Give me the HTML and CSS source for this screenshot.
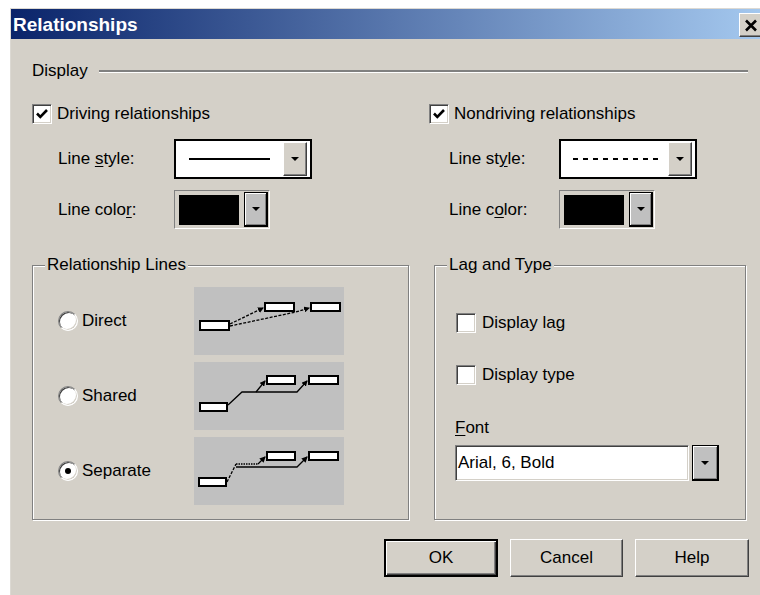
FILE: index.html
```html
<!DOCTYPE html>
<html lang="en">
<head>
<meta charset="utf-8">
<title>Relationships</title>
<link rel="stylesheet" href="styles.css">
</head>
<body>
<div class="window">
  <div class="titlebar">
    <span class="title">Relationships</span>
    <button class="close" aria-label="Close">
      <svg width="14" height="13" viewBox="0 0 14 13"><path d="M2 1.5L12 11.5M12 1.5L2 11.5" stroke="#000" stroke-width="2.6" fill="none"/></svg>
    </button>
  </div>

  <div class="client">
    <div class="section-head"><span>Display</span><span class="rule"></span></div>

    <div class="display-cols">
      <div class="col col-left">
        <div class="check-row">
          <span class="checkbox"><svg viewBox="0 0 16 16" width="16" height="16"><path d="M3 7.5L6.3 10.8L13 4" stroke="#000" stroke-width="2.6" fill="none"/></svg></span>
          <span>Driving relationships</span>
        </div>
        <div class="field-row">
          <span>Line <u>s</u>tyle:</span>
          <div class="combo">
            <span class="combo-value"><span class="line-sample solid"></span></span>
            <span class="combo-btn"><span class="arrow"></span></span>
          </div>
        </div>
        <div class="field-row">
          <span>Line colo<u>r</u>:</span>
          <div class="color-combo">
            <span class="swatch"></span>
            <span class="dark-btn"><span class="arrow"></span></span>
          </div>
        </div>
      </div>

      <div class="col col-right">
        <div class="check-row">
          <span class="checkbox"><svg viewBox="0 0 16 16" width="16" height="16"><path d="M3 7.5L6.3 10.8L13 4" stroke="#000" stroke-width="2.6" fill="none"/></svg></span>
          <span>Nondriving relationships</span>
        </div>
        <div class="field-row">
          <span>Line st<u>y</u>le:</span>
          <div class="combo">
            <span class="combo-value"><span class="line-sample dashed"></span></span>
            <span class="combo-btn"><span class="arrow"></span></span>
          </div>
        </div>
        <div class="field-row">
          <span>Line c<u>o</u>lor:</span>
          <div class="color-combo">
            <span class="swatch"></span>
            <span class="dark-btn"><span class="arrow"></span></span>
          </div>
        </div>
      </div>
    </div>

    <div class="groups">
      <fieldset class="group group-lines">
        <legend>Relationship Lines</legend>
        <div class="line-rows">
          <div class="radio-row"><span class="radio"></span><span>Direct</span></div>
          <svg class="diagram" viewBox="0 0 150 68" width="150" height="68">
            <defs><marker id="ah1" viewBox="0 0 6 6" refX="5" refY="3" markerWidth="6" markerHeight="6" markerUnits="userSpaceOnUse" orient="auto"><path d="M0 0L6 3L0 6z"/></marker></defs>
            <g fill="none" stroke="#000" stroke-width="1.3" stroke-dasharray="3 1.5">
              <path d="M36 37L69 21" marker-end="url(#ah1)"/>
              <path d="M36 39L102 25L115 21" marker-end="url(#ah1)"/>
            </g>
            <g fill="#fff" stroke="#000" stroke-width="2">
              <rect x="6" y="34" width="29" height="9"/>
              <rect x="71" y="16" width="29" height="8"/>
              <rect x="117" y="16" width="29" height="8"/>
            </g>
          </svg>

          <div class="radio-row"><span class="radio"></span><span>Shared</span></div>
          <svg class="diagram" viewBox="0 0 150 68" width="150" height="68">
            <defs><marker id="ah2" viewBox="0 0 6 6" refX="5" refY="3" markerWidth="6" markerHeight="6" markerUnits="userSpaceOnUse" orient="auto"><path d="M0 0L6 3L0 6z"/></marker></defs>
            <g fill="none" stroke="#000" stroke-width="1.3">
              <path d="M34 43L48 30L103 30L113 19" marker-end="url(#ah2)"/>
              <path d="M62 30L71 19" marker-end="url(#ah2)"/>
            </g>
            <g fill="#fff" stroke="#000" stroke-width="2">
              <rect x="6" y="41" width="27" height="8"/>
              <rect x="73" y="14" width="28" height="8"/>
              <rect x="115" y="14" width="29" height="8"/>
            </g>
          </svg>

          <div class="radio-row"><span class="radio checked"></span><span>Separate</span></div>
          <svg class="diagram" viewBox="0 0 150 68" width="150" height="68">
            <defs><marker id="ah3" viewBox="0 0 6 6" refX="5" refY="3" markerWidth="6" markerHeight="6" markerUnits="userSpaceOnUse" orient="auto"><path d="M0 0L6 3L0 6z"/></marker></defs>
            <g fill="none" stroke="#000" stroke-width="1.3">
              <path d="M33 45L42 27" stroke-dasharray="3 1.5"/>
              <path d="M42 27L64 27" stroke-dasharray="1.5 1"/>
              <path d="M64 27L71 20" marker-end="url(#ah3)"/>
              <path d="M42 30L103 30L113 20" marker-end="url(#ah3)"/>
            </g>
            <g fill="#fff" stroke="#000" stroke-width="2">
              <rect x="5" y="41" width="27" height="8"/>
              <rect x="73" y="15" width="28" height="8"/>
              <rect x="115" y="15" width="29" height="8"/>
            </g>
          </svg>
        </div>
      </fieldset>

      <fieldset class="group group-lag">
        <legend>Lag and Type</legend>
        <div class="lag-body">
          <div class="check-row lag-check"><span class="checkbox"></span><span>Display lag</span></div>
          <div class="check-row lag-check second"><span class="checkbox"></span><span>Display type</span></div>
          <div class="font-label"><u>F</u>ont</div>
          <div class="font-combo">
            <span class="font-field">Arial, 6, Bold</span>
            <span class="dark-btn wide"><span class="arrow"></span></span>
          </div>
        </div>
      </fieldset>
    </div>

    <div class="actions">
      <button class="btn default">OK</button>
      <button class="btn narrow">Cancel</button>
      <button class="btn">Help</button>
    </div>
  </div>
</div>
</body>
</html>
```

FILE: styles.css
```css
* {
  box-sizing: border-box;
}

html,
body {
  margin: 0;
  background: #fff;
  overflow: hidden;
}

body {
  font-family: "Liberation Sans", Arial, sans-serif;
  font-size: 17px;
  line-height: 20px;
  color: #000;
}

u {
  text-decoration-thickness: 1px;
  text-underline-offset: 2px;
}

/* dialog frame */
.window {
  margin: 8px 0 0 10px;
  width: 761px;
  height: 600px;
  background: #d4d0c8;
  border-top: 1px solid #dcd9d3;
  border-left: 1px solid #dcd9d3;
}

.titlebar {
  height: 30px;
  display: flex;
  align-items: center;
  justify-content: space-between;
  padding-left: 2px;
  background: linear-gradient(to right, #0a246a, #a6caf0);
}

.title {
  color: #fff;
  font-weight: bold;
  font-size: 19px;
  margin-top: 1px;
}

.close {
  width: 24px;
  height: 24px;
  margin: 2px 8px 0 0;
  padding: 0;
  display: flex;
  align-items: center;
  justify-content: center;
  background: #d4d0c8;
  border: 1px solid;
  border-color: #fff #404040 #404040 #fff;
  box-shadow: inset -1px -1px #808080;
}

.client {
  padding: 22px 22px 0 21px;
}

/* "Display" heading with etched rule */
.section-head {
  display: flex;
  align-items: center;
  height: 20px;
}

.rule {
  flex: 1;
  margin: 0 1px 0 11px;
  border-top: 2px solid #808080;
  border-bottom: 1px solid #fff;
}

.display-cols {
  display: flex;
  margin-top: 22px;
}

.col-left {
  width: 397px;
}

.col-right {
  flex: 1;
}

.check-row {
  display: flex;
  align-items: center;
  gap: 5px;
  height: 21px;
}

.checkbox {
  width: 20px;
  height: 20px;
  flex: none;
  display: flex;
  align-items: center;
  justify-content: center;
  background: #fff;
  border: 1px solid;
  border-color: #808080 #fff #fff #808080;
  box-shadow: inset 1px 1px #404040, inset -1px -1px #d4d0c8;
}

.field-row {
  display: grid;
  grid-template-columns: 116px auto;
  align-items: center;
  justify-items: start;
  margin-top: 15px;
  padding-left: 26px;
}

.field-row + .field-row {
  margin-top: 11px;
}

.col-right .field-row {
  grid-template-columns: 110px auto;
  padding-left: 20px;
}

/* line style combo */
.combo {
  width: 138px;
  height: 40px;
  display: flex;
  padding: 1px 3px 1px 1px;
  background: #fff;
  border: 2px solid #000;
}

.combo-value {
  flex: 1;
  display: flex;
  align-items: center;
}

.line-sample {
  height: 2px;
}

.line-sample.solid {
  margin-left: 12px;
  width: 81px;
  background: #000;
}

.line-sample.dashed {
  margin-left: 11px;
  width: 85px;
  background: repeating-linear-gradient(to right, #000 0 5px, transparent 5px 10px);
}

.combo-btn {
  width: 24px;
  display: flex;
  align-items: center;
  justify-content: center;
  background: #d4d0c8;
  border: 1px solid;
  border-color: #fff #404040 #404040 #fff;
  box-shadow: inset -1px -1px #808080;
}

.arrow {
  width: 0;
  height: 0;
  border-left: 4px solid transparent;
  border-right: 4px solid transparent;
  border-top: 4px solid #000;
}

/* colour picker combo */
.color-combo {
  width: 96px;
  height: 39px;
  display: flex;
  align-items: center;
  gap: 5px;
  padding: 0 1px 0 4px;
  border: 1px solid;
  border-color: #808080 #fff #fff #808080;
}

.swatch {
  width: 60px;
  height: 30px;
  background: #000;
}

.dark-btn {
  width: 24px;
  height: 35px;
  display: flex;
  align-items: center;
  justify-content: center;
  background: #c0c0c0;
  border: 2px solid #000;
  border-top-width: 1px;
  border-left-width: 1px;
  box-shadow: inset 1px 1px #fff, inset -1px -1px #808080;
}

.dark-btn.wide {
  width: 27px;
  height: 36px;
}

/* group boxes */
.groups {
  display: flex;
  gap: 25px;
  margin-top: 26px;
}

.group {
  margin: 0;
  min-width: 0;
  border: 1px solid #808080;
  box-shadow: 1px 1px 0 #fff, inset 1px 1px 0 #fff;
}

.group legend {
  margin-left: 12px;
  padding: 0 2px;
  height: 20px;
  line-height: 20px;
  background: #d4d0c8;
}

.group-lines {
  width: 377px;
  padding: 12px 0 14px 0;
}

.line-rows {
  display: grid;
  grid-template-columns: 136px 150px;
  row-gap: 7px;
  align-items: center;
  padding-left: 25px;
}

.radio-row {
  display: flex;
  align-items: center;
  gap: 4px;
}

.radio {
  width: 20px;
  height: 20px;
  flex: none;
  display: flex;
  align-items: center;
  justify-content: center;
  border-radius: 50%;
  background: #fff;
  border: 1px solid;
  border-color: #808080 #fff #fff #808080;
  box-shadow: inset 1px 1px #404040, inset -1px -1px #d4d0c8;
}

.radio.checked::after {
  content: "";
  width: 6px;
  height: 6px;
  border-radius: 50%;
  background: #000;
}

.diagram {
  display: block;
  background: #c0c0c0;
}

.group-lag {
  width: 312px;
  padding: 37px 0 0 0;
}

.lag-body {
  padding-left: 20px;
}

.lag-check {
  margin-left: 1px;
  gap: 6px;
}

.lag-check.second {
  margin-top: 31px;
}

.font-label {
  margin-top: 33px;
}

.font-combo {
  display: flex;
  gap: 3px;
  margin-top: 7px;
}

.font-field {
  width: 234px;
  height: 36px;
  display: flex;
  align-items: center;
  padding-left: 2px;
  background: #fff;
  border: 1px solid;
  border-color: #808080 #fff #fff #808080;
  box-shadow: inset 1px 1px #404040, inset -1px -1px #d4d0c8;
}

/* push buttons */
.actions {
  display: flex;
  justify-content: flex-end;
  gap: 12px;
  margin-top: 19px;
}

.btn {
  width: 114px;
  height: 38px;
  padding: 0;
  font: inherit;
  color: #000;
  background: #d4d0c8;
  border: 1px solid;
  border-color: #fff #404040 #404040 #fff;
  box-shadow: inset -1px -1px #808080, inset 1px 1px #d4d0c8;
}

.btn.narrow {
  width: 113px;
}

.btn.default {
  border: 2px solid #000;
  box-shadow: inset 1px 1px #fff, inset -1px -1px #404040, inset -2px -2px #808080;
}
```
